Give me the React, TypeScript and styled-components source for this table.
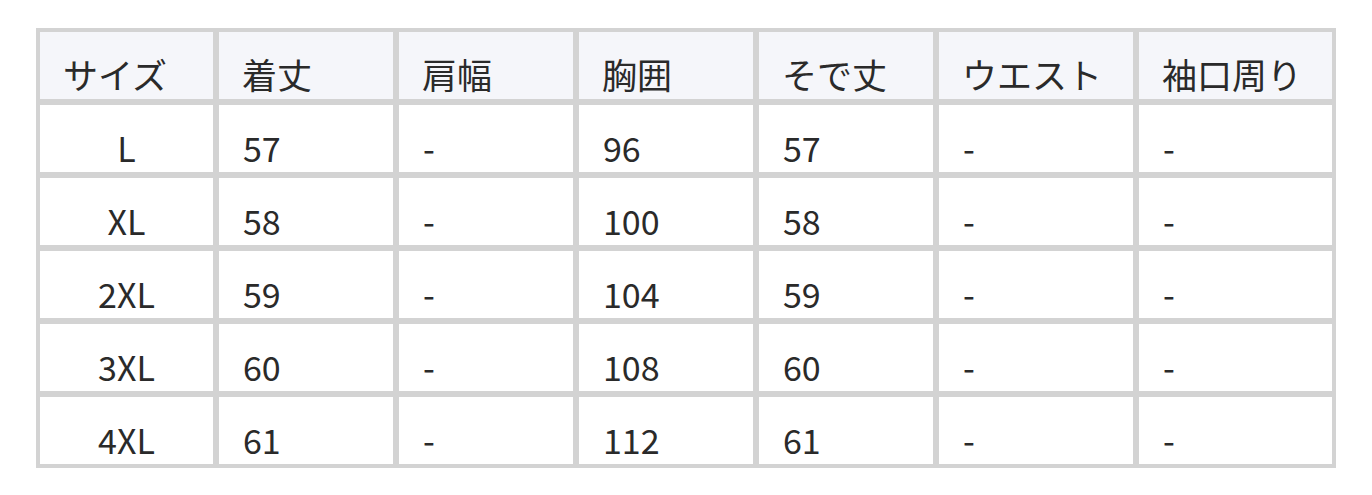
import React from "react";
import styled, { createGlobalStyle } from "styled-components";

const GlobalStyle = createGlobalStyle`
  html, body {
    margin: 0;
    padding: 0;
    background: #ffffff;
  }
  body {
    font-family: "Noto Sans CJK JP", "Noto Sans", sans-serif;
    color: #2a2a2a;
  }
`;

const Page = styled.div`
  padding: 28px 0 0 36px;
`;

const Table = styled.table`
  border-collapse: separate;
  border-spacing: 0;
  border: 1px solid #d3d3d3;
  table-layout: fixed;
  font-size: 34px;
`;

const HeadCell = styled.th<{ $w: number }>`
  width: ${(p) => p.$w}px;
  box-sizing: border-box;
  height: 73px;
  border: 3px solid #d3d3d3;
  background: #f5f6fa;
  padding: 0 24px 0 23px;
  text-align: left;
  vertical-align: bottom;
  font-size: 35px;
  font-weight: 400;
  line-height: normal;
  white-space: nowrap;
`;

const Cell = styled.td<{ $center?: boolean }>`
  box-sizing: border-box;
  height: 73px;
  border: 3px solid #d3d3d3;
  background: #ffffff;
  padding: 0 24px;
  text-align: ${(p) => (p.$center ? "center" : "left")};
  vertical-align: bottom;
  line-height: normal;
  white-space: nowrap;
`;

const columns: { label: string; w: number }[] = [
  { label: "サイズ", w: 179 },
  { label: "着丈", w: 180 },
  { label: "肩幅", w: 180 },
  { label: "胸囲", w: 180 },
  { label: "そで丈", w: 180 },
  { label: "ウエスト", w: 200 },
  { label: "袖口周り", w: 199 },
];

const rows: string[][] = [
  ["L", "57", "-", "96", "57", "-", "-"],
  ["XL", "58", "-", "100", "58", "-", "-"],
  ["2XL", "59", "-", "104", "59", "-", "-"],
  ["3XL", "60", "-", "108", "60", "-", "-"],
  ["4XL", "61", "-", "112", "61", "-", "-"],
];

export default function App() {
  return (
    <>
      <GlobalStyle />
      <Page>
        <Table>
          <thead>
            <tr>
              {columns.map((c) => (
                <HeadCell key={c.label} $w={c.w}>
                  {c.label}
                </HeadCell>
              ))}
            </tr>
          </thead>
          <tbody>
            {rows.map((r) => (
              <tr key={r[0]}>
                {r.map((v, i) => (
                  <Cell key={i} $center={i === 0}>
                    {v}
                  </Cell>
                ))}
              </tr>
            ))}
          </tbody>
        </Table>
      </Page>
    </>
  );
}
